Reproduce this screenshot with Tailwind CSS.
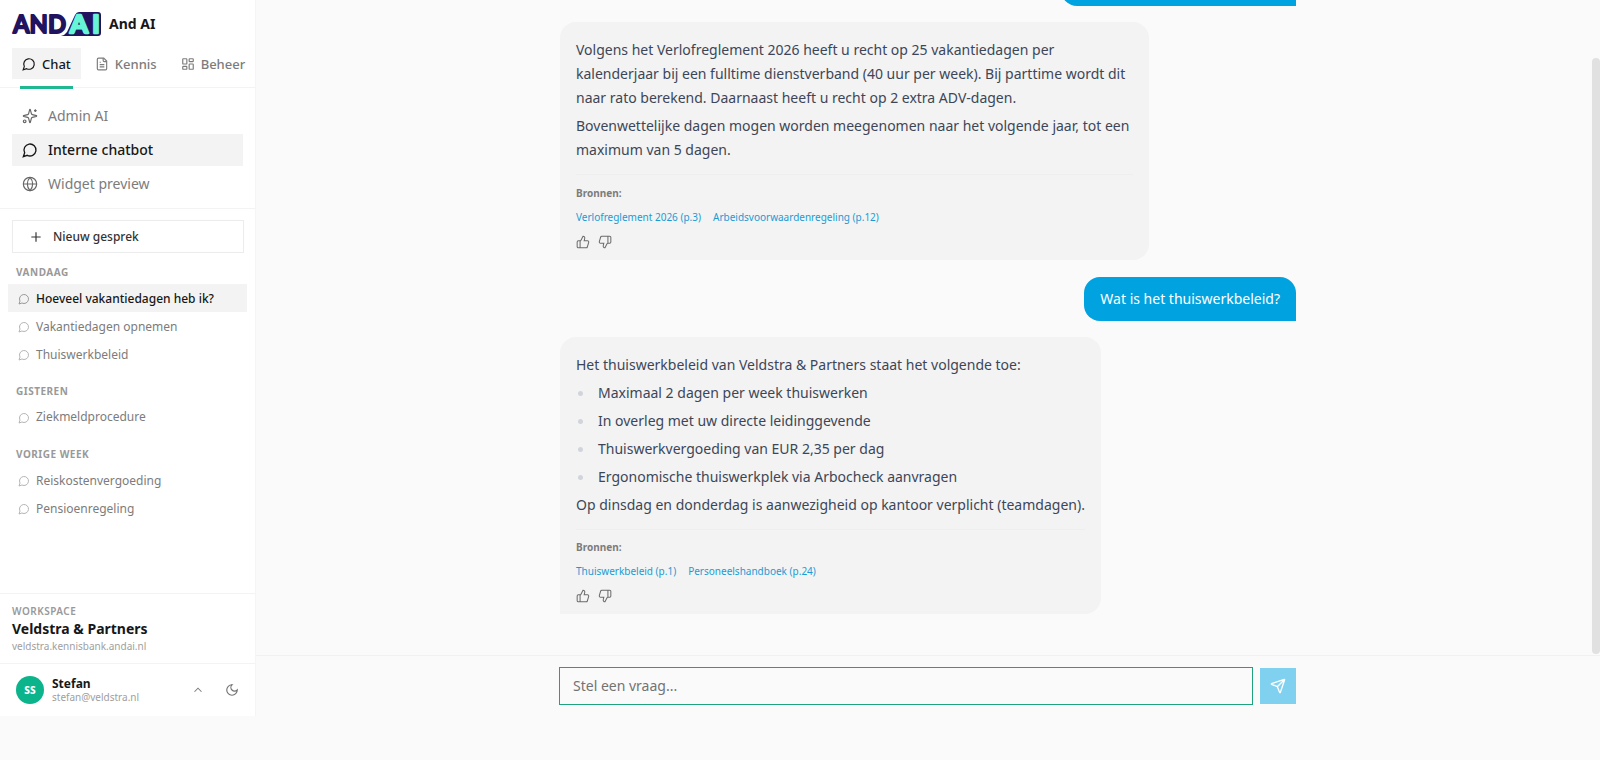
<!DOCTYPE html>
<html lang="nl">

<head>
  <meta charset="UTF-8" />
  <meta name="viewport" content="width=device-width, initial-scale=1.0" />
  <title>And AI - Interne chatbot</title>
  <script src="https://cdn.jsdelivr.net/npm/@tailwindcss/browser@4"></script>
</head>

<body class="bg-[#fafafa] font-['Noto_Sans',sans-serif] text-[#171717] overflow-hidden">

  <!-- Icons -->
  <svg class="hidden">
    <symbol id="chat" viewBox="0 0 24 24"><path d="M7.9 20A9 9 0 1 0 4 16.1L2 22Z" /></symbol>
    <symbol id="file" viewBox="0 0 24 24"><path d="M15 2H6a2 2 0 0 0-2 2v16a2 2 0 0 0 2 2h12a2 2 0 0 0 2-2V7Z" /><path d="M14 2v4a2 2 0 0 0 2 2h4M10 9H8M16 13H8M16 17H8" /></symbol>
    <symbol id="dashboard" viewBox="0 0 24 24"><rect width="7" height="9" x="3" y="3" rx="1" /><rect width="7" height="5" x="14" y="3" rx="1" /><rect width="7" height="9" x="14" y="12" rx="1" /><rect width="7" height="5" x="3" y="16" rx="1" /></symbol>
    <symbol id="sparkles" viewBox="0 0 24 24"><path d="M9.937 15.5A2 2 0 0 0 8.5 14.063l-6.135-1.582a.5.5 0 0 1 0-.962L8.5 9.936A2 2 0 0 0 9.937 8.5l1.582-6.135a.5.5 0 0 1 .963 0L14.063 8.5A2 2 0 0 0 15.5 9.937l6.135 1.581a.5.5 0 0 1 0 .964L15.5 14.063a2 2 0 0 0-1.437 1.437l-1.582 6.135a.5.5 0 0 1-.963 0z" /><path d="M20 2v4M22 4h-4" /><circle cx="4" cy="20" r="2" /></symbol>
    <symbol id="globe" viewBox="0 0 24 24"><circle cx="12" cy="12" r="10" /><path d="M12 2a14.5 14.5 0 0 0 0 20 14.5 14.5 0 0 0 0-20M2 12h20" /></symbol>
    <symbol id="plus" viewBox="0 0 24 24"><path d="M5 12h14M12 5v14" /></symbol>
    <symbol id="up" viewBox="0 0 24 24"><path d="m18 15-6-6-6 6" /></symbol>
    <symbol id="moon" viewBox="0 0 24 24"><path d="M12 3a6 6 0 0 0 9 9 9 9 0 1 1-9-9Z" /></symbol>
    <symbol id="thumb-up" viewBox="0 0 24 24"><path d="M7 10v12M15 5.88 14 10h5.83a2 2 0 0 1 1.92 2.56l-2.33 8A2 2 0 0 1 17.5 22H4a2 2 0 0 1-2-2v-8a2 2 0 0 1 2-2h2.76a2 2 0 0 0 1.79-1.11L12 2a3.13 3.13 0 0 1 3 3.88Z" /></symbol>
    <symbol id="thumb-down" viewBox="0 0 24 24"><path d="M17 14V2M9 18.12 10 14H4.17a2 2 0 0 1-1.92-2.56l2.33-8A2 2 0 0 1 6.5 2H20a2 2 0 0 1 2 2v8a2 2 0 0 1-2 2h-2.76a2 2 0 0 0-1.79 1.11L12 22a3.13 3.13 0 0 1-3-3.88Z" /></symbol>
    <symbol id="send" viewBox="0 0 24 24"><path d="M14.536 21.686a.5.5 0 0 0 .937-.024l6.5-19a.496.496 0 0 0-.635-.635l-19 6.5a.5.5 0 0 0-.024.937l7.93 3.18a2 2 0 0 1 1.112 1.11zM21.854 2.147l-10.94 10.939" /></symbol>
  </svg>

  <div class="flex h-[716px]">

    <!-- Sidebar -->
    <aside class="w-64 shrink-0 flex flex-col bg-white border-r border-[#f5f5f5]">
      <!-- Logo -->
      <div class="flex items-center gap-2 px-3 pt-3 h-9 shrink-0">
        <svg class="w-[89px] h-6 overflow-visible" viewBox="0 0 89 24">
          <path d="M67 0H86a3 3 0 0 1 3 3V21a3 3 0 0 1-3 3H49Q53 23 55 20L63 3Q64.500 0 67 0Z" fill="#21135f" />
          <g font-family="Lato, sans-serif" font-weight="700" font-size="25" stroke-linejoin="round">
            <text x="1" y="21" textLength="53" lengthAdjust="spacingAndGlyphs" fill="#21135f" stroke="#21135f" stroke-width="1.8">AND</text>
            <g fill="#66f5d6" stroke="#66f5d6" stroke-width="2.4">
              <text x="58" y="21.300" textLength="18" lengthAdjust="spacingAndGlyphs">A</text>
              <text x="80.200" y="21.300">I</text>
            </g>
          </g>
        </svg>
        <span class="text-sm leading-6 font-bold">And AI</span>
      </div>

      <!-- Tabs -->
      <nav class="flex gap-1 px-3 pt-3 h-[52px] shrink-0 border-b border-[#f3f3f3] text-[13px] font-medium text-[#7c7c7c]">
        <a class="relative flex items-center gap-1.5 h-[31px] px-2.5 pt-0.5 bg-[#f3f3f3] text-[#171717]">
          <svg class="w-3.5 h-3.5 -mt-0.5 fill-none stroke-current stroke-2"><use href="#chat" /></svg>
          Chat
          <span class="absolute left-2 right-2 -bottom-[10px] h-[3px] bg-[#1fb890]"></span>
        </a>
        <a class="flex items-center gap-1.5 h-[31px] px-2.5 pt-0.5">
          <svg class="w-3.5 h-3.5 -mt-0.5 fill-none stroke-current stroke-2"><use href="#file" /></svg>
          Kennis
        </a>
        <a class="flex items-center gap-1.5 h-[31px] px-2.5 pt-0.5">
          <svg class="w-3.5 h-3.5 -mt-0.5 fill-none stroke-current stroke-2"><use href="#dashboard" /></svg>
          Beheer
        </a>
      </nav>

      <!-- Chat modes -->
      <div class="flex flex-col gap-0.5 px-3 pt-3 h-[121px] shrink-0 border-b border-[#f3f3f3] text-sm text-[#7c7c7c]">
        <a class="flex items-center gap-2.5 h-8 px-2.5">
          <svg class="w-4 h-4 fill-none stroke-[#666] stroke-[1.75]"><use href="#sparkles" /></svg>
          Admin AI
        </a>
        <a class="flex items-center gap-2.5 h-8 px-2.5 bg-[#f3f3f3] font-medium text-[#171717]">
          <svg class="w-4 h-4 fill-none stroke-current stroke-2"><use href="#chat" /></svg>
          Interne chatbot
        </a>
        <a class="flex items-center gap-2.5 h-8 px-2.5">
          <svg class="w-4 h-4 fill-none stroke-[#666] stroke-[1.75]"><use href="#globe" /></svg>
          Widget preview
        </a>
      </div>

      <!-- Conversations -->
      <div class="flex-1 pt-[11px] text-xs text-[#7c7c7c]">
        <button class="flex items-center gap-2 mx-3 w-[232px] h-[33px] px-4 border border-[#ececec] font-medium text-[#333]">
          <svg class="w-4 h-4 -ml-px mr-px fill-none stroke-current stroke-[1.75]"><use href="#plus" /></svg>
          Nieuw gesprek
        </button>

        <h3 class="mt-3 px-4 h-[19px] leading-[15px] text-[10px] font-bold tracking-[0.5px] text-[#999]">VANDAAG</h3>
        <div class="mx-2">
          <a class="flex items-center gap-1.5 h-7 px-2.5 pt-0.5 bg-[#f3f3f3] font-medium text-[#171717]">
            <svg class="w-3 h-3 fill-none stroke-[#999] stroke-2"><use href="#chat" /></svg>
            Hoeveel vakantiedagen heb ik?
          </a>
          <a class="flex items-center gap-1.5 h-7 px-2.5 pt-0.5">
            <svg class="w-3 h-3 fill-none stroke-[#b5b5b5] stroke-2"><use href="#chat" /></svg>
            Vakantiedagen opnemen
          </a>
          <a class="flex items-center gap-1.5 h-7 px-2.5 pt-0.5">
            <svg class="w-3 h-3 fill-none stroke-[#b5b5b5] stroke-2"><use href="#chat" /></svg>
            Thuiswerkbeleid
          </a>
        </div>

        <h3 class="mt-4 px-4 h-[19px] leading-[15px] text-[10px] font-bold tracking-[0.5px] text-[#999]">GISTEREN</h3>
        <div class="mx-2">
          <a class="flex items-center gap-1.5 h-7 px-2.5">
            <svg class="w-3 h-3 mt-0.5 fill-none stroke-[#b5b5b5] stroke-2"><use href="#chat" /></svg>
            Ziekmeldprocedure
          </a>
        </div>

        <h3 class="mt-4 px-4 h-[19px] leading-[15px] text-[10px] font-bold tracking-[0.5px] text-[#999]">VORIGE WEEK</h3>
        <div class="mx-2">
          <a class="flex items-center gap-1.5 h-7 px-2.5 pt-0.5">
            <svg class="w-3 h-3 fill-none stroke-[#b5b5b5] stroke-2"><use href="#chat" /></svg>
            Reiskostenvergoeding
          </a>
          <a class="flex items-center gap-1.5 h-7 px-2.5 pt-0.5">
            <svg class="w-3 h-3 fill-none stroke-[#b5b5b5] stroke-2"><use href="#chat" /></svg>
            Pensioenregeling
          </a>
        </div>
      </div>

      <!-- Workspace -->
      <div class="h-[70px] shrink-0 px-3 pt-[10px] border-t border-[#f3f3f3]">
        <p class="text-[10px] leading-[15px] font-semibold tracking-[0.5px] text-[#999]">WORKSPACE</p>
        <p class="text-sm font-bold">Veldstra &amp; Partners</p>
        <p class="text-[10px] leading-[15px] text-[#a0a0a0]">veldstra.kennisbank.andai.nl</p>
      </div>

      <!-- User -->
      <div class="flex items-center h-[53px] shrink-0 px-4 border-t border-[#f3f3f3]">
        <div class="flex items-center justify-center w-7 h-7 rounded-full bg-[#0bb48a] text-white text-[10px] font-extrabold">SS</div>
        <div class="flex-1 ml-2">
          <p class="text-xs leading-[14px] font-bold">Stefan</p>
          <p class="text-[10px] leading-[13px] text-[#a0a0a0]">stefan@veldstra.nl</p>
        </div>
        <svg class="w-3.5 h-3.5 mr-5 fill-none stroke-[#7a7a7a] stroke-[1.75]"><use href="#up" /></svg>
        <svg class="w-3.5 h-3.5 fill-none stroke-[#737373] stroke-2"><use href="#moon" /></svg>
      </div>
    </aside>

    <!-- Chat -->
    <main class="relative flex-1 flex flex-col">
      <div class="h-[655px] shrink-0 overflow-hidden">
        <div class="flex flex-col items-start gap-4 w-[736px] mx-auto text-sm leading-6 text-[#3d4657]">

          <div class="self-end w-[235px] h-1.5 overflow-hidden flex items-end">
            <div class="w-full h-11 shrink-0 rounded-2xl rounded-br-none bg-[#00a3e0]"></div>
          </div>

          <div class="w-[589px] h-[238px] px-4 pt-4 rounded-2xl rounded-bl-none bg-[#f3f3f3]">
            <p>Volgens het Verlofreglement 2026 heeft u recht op 25 vakantiedagen per kalenderjaar bij een fulltime dienstverband (40 uur per week). Bij parttime wordt dit naar rato berekend. Daarnaast heeft u recht op 2 extra ADV-dagen.</p>
            <p class="mt-1">Bovenwettelijke dagen mogen worden meegenomen naar het volgende jaar, tot een maximum van 5 dagen.</p>
            <div class="mt-3 pt-1.5 border-t border-[#eeeeee] text-[10px]">
              <p class="font-bold text-[#7c7c7c]">Bronnen:</p>
              <div class="flex gap-3 text-[#1a9bd3]">
                <a>Verlofreglement 2026 (p.3)</a>
                <a>Arbeidsvoorwaardenregeling (p.12)</a>
              </div>
            </div>
            <div class="flex gap-2 mt-1.5 text-[#6b6b6b]">
              <svg class="w-3.5 h-3.5 fill-none stroke-current stroke-[1.75]"><use href="#thumb-up" /></svg>
              <svg class="w-3.5 h-3.5 fill-none stroke-current stroke-[1.75]"><use href="#thumb-down" /></svg>
            </div>
          </div>

          <div class="self-end px-4 py-[10px] mt-px rounded-2xl rounded-br-none bg-[#00a3e0] text-white">Wat is het thuiswerkbeleid?</div>

          <div class="h-[277px] px-4 pt-4 rounded-2xl rounded-bl-none bg-[#f3f3f3]">
            <p>Het thuiswerkbeleid van Veldstra &amp; Partners staat het volgende toe:</p>
            <ul class="my-1 space-y-1">
              <li class="flex items-center gap-[15px]"><span class="w-[5px] h-[5px] ml-0.5 rounded-full bg-[#d1d5db]"></span>Maximaal 2 dagen per week thuiswerken</li>
              <li class="flex items-center gap-[15px]"><span class="w-[5px] h-[5px] ml-0.5 rounded-full bg-[#d1d5db]"></span>In overleg met uw directe leidinggevende</li>
              <li class="flex items-center gap-[15px]"><span class="w-[5px] h-[5px] ml-0.5 rounded-full bg-[#d1d5db]"></span>Thuiswerkvergoeding van EUR 2,35 per dag</li>
              <li class="flex items-center gap-[15px]"><span class="w-[5px] h-[5px] ml-0.5 rounded-full bg-[#d1d5db]"></span>Ergonomische thuiswerkplek via Arbocheck aanvragen</li>
            </ul>
            <p>Op dinsdag en donderdag is aanwezigheid op kantoor verplicht (teamdagen).</p>
            <div class="mt-3 pt-[5px] border-t border-[#eeeeee] text-[10px]">
              <p class="font-bold text-[#7c7c7c]">Bronnen:</p>
              <div class="flex gap-3 text-[#1a9bd3]">
                <a>Thuiswerkbeleid (p.1)</a>
                <a>Personeelshandboek (p.24)</a>
              </div>
            </div>
            <div class="flex gap-2 mt-1.5 text-[#6b6b6b]">
              <svg class="w-3.5 h-3.5 fill-none stroke-current stroke-[1.75]"><use href="#thumb-up" /></svg>
              <svg class="w-3.5 h-3.5 fill-none stroke-current stroke-[1.75]"><use href="#thumb-down" /></svg>
            </div>
          </div>
        </div>
      </div>

      <!-- Scrollbar thumb -->
      <div class="absolute right-0 top-[58px] w-2 h-[596px] rounded-full bg-[#e1e1e1]"></div>

      <!-- Input -->
      <div class="flex-1 pt-3 border-t border-[#f1f1f1]">
        <form class="flex gap-2 w-[736px] mx-auto">
          <input type="text" placeholder="Stel een vraag..."
            class="flex-1 h-9 px-[13px] pb-0.5 text-sm outline outline-[#1fa37c] placeholder:text-[#737373]" />
          <button type="button" class="flex items-center justify-center w-9 h-9 bg-[#7fd1ef] text-white">
            <svg class="w-4 h-4 fill-none stroke-current stroke-2"><use href="#send" /></svg>
          </button>
        </form>
      </div>
    </main>
  </div>
</body>

</html>
